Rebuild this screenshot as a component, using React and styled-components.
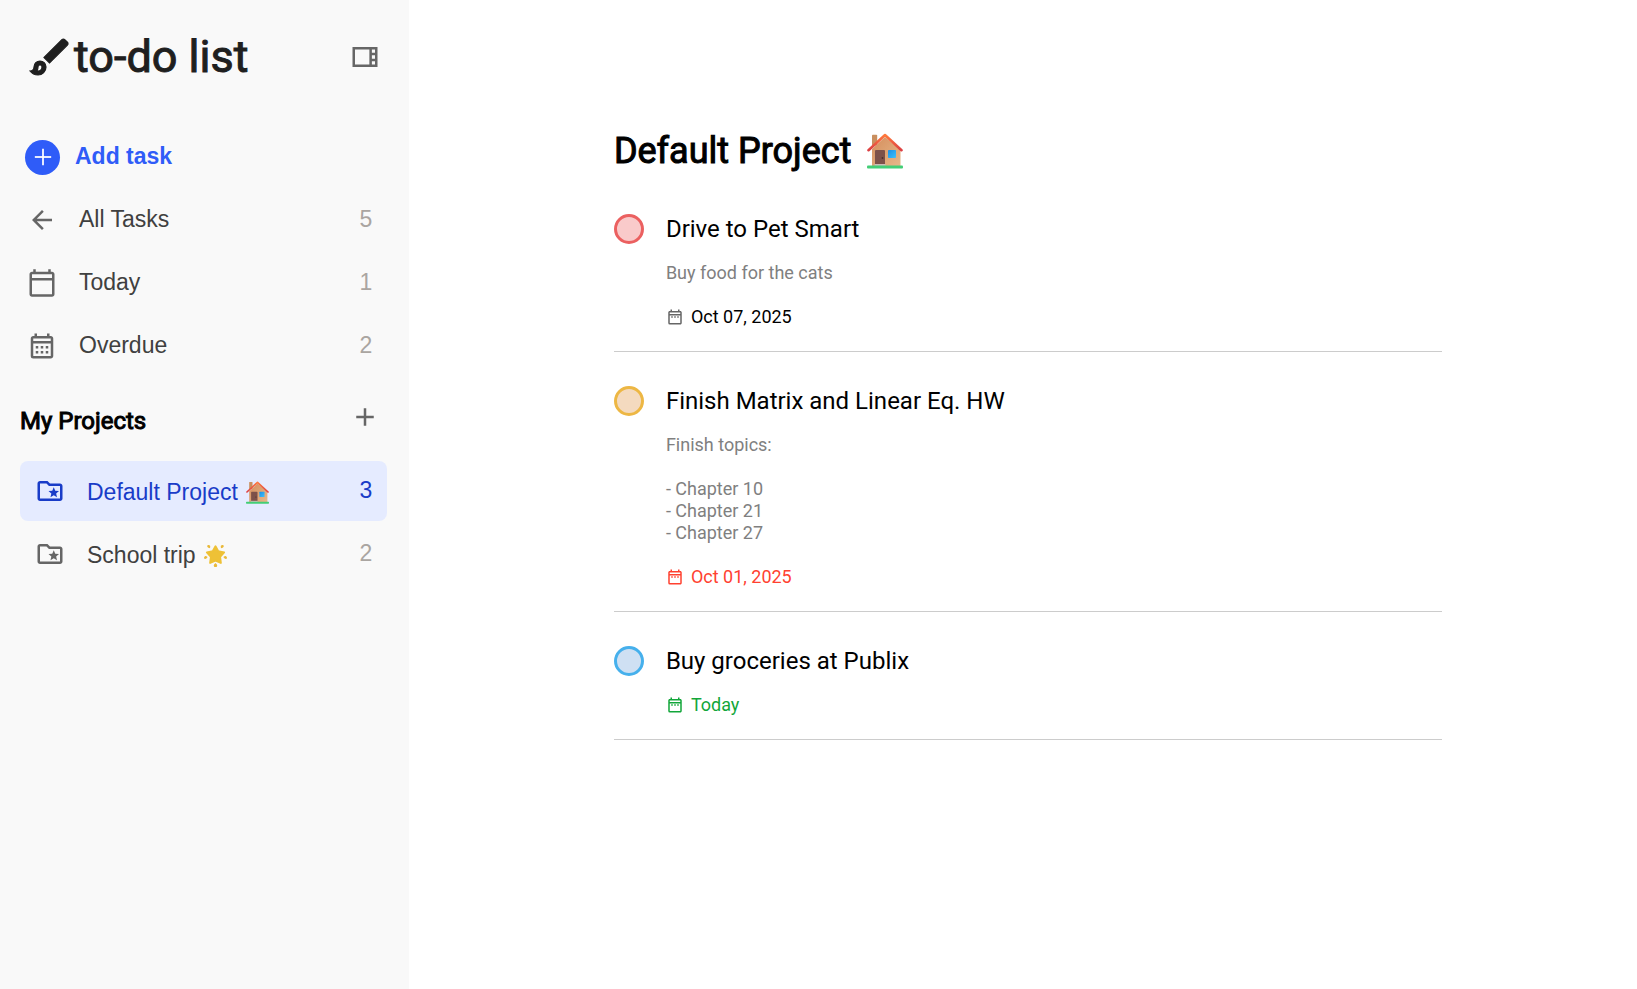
import React, { useState } from 'react';
import styled, { createGlobalStyle, css } from 'styled-components';
import { Plus } from 'lucide-react';
import {
  MdAdd,
  MdArrowBack,
  MdOutlineBrush,
  MdOutlineCalendarMonth,
  MdOutlineCalendarToday,
  MdOutlineDateRange,
  MdOutlineFolderSpecial,
  MdOutlineViewSidebar,
} from 'react-icons/md';

const GlobalStyle = createGlobalStyle`
  *, *::before, *::after { box-sizing: border-box; }
  body { margin: 0; background: #fff; color: #000; font-family: Roboto, sans-serif; }
  h1, h2, h3, p, ul { margin: 0; padding: 0; }
  ul { list-style: none; }
  button { border: 0; background: none; padding: 0; font: inherit; color: inherit; cursor: pointer; }
  svg { display: block; flex: none; }
`;

const Layout = styled.div`
  display: flex;
  min-height: 100vh;
`;

const Sidebar = styled.aside`
  width: 25%;
  flex: none;
  padding: 0 22px 0 20px;
  background: #f9f9f9;
`;

const Bar = styled.div`
  display: flex;
  align-items: center;
  justify-content: space-between;
  padding-right: 7px;
`;

const BrandBar = styled(Bar)`
  height: 114px;
  padding-left: 6px;
  margin-bottom: 13px;
`;

const ProjectsBar = styled(Bar)`
  height: 85px;
`;

const boldRegular = css`
  font-weight: 400;
  -webkit-text-stroke: 1px currentColor;
`;

const Brand = styled.h1`
  display: flex;
  align-items: center;
  color: #1f1f1f;
  font-size: 45px;
  line-height: 56px;
  white-space: nowrap;
  ${boldRegular}
`;

const BrushIcon = styled(MdOutlineBrush)`
  path:not([fill='none']) {
    stroke: currentColor;
    stroke-width: 0.6px;
  }
  path[fill='none'] {
    stroke: none;
  }
`;

const IconButton = styled.button`
  color: #666;
  font-size: 30px;
  padding-bottom: ${(p) => (p.$raised ? '4px' : '0')};
`;

const SectionTitle = styled.h2`
  padding-top: 4px;
  font-size: 24px;
  line-height: 30px;
  ${boldRegular}
`;

const NavList = styled.ul`
  display: flex;
  flex-direction: column;
  gap: 3px;
`;

const NavButton = styled.button`
  display: flex;
  align-items: center;
  width: 100%;
  height: 60px;
  gap: 22px;
  padding: 0 15px 0 7px;
  border-radius: 8px;
  color: #404040;
  font-family: 'Liberation Sans', Arial, sans-serif;
  font-size: 23px;
  line-height: 26px;
  text-align: left;
`;

const ProjectButton = styled(NavButton)`
  padding-left: 15px;
  background: ${(p) => (p.$active ? '#e5ebff' : 'transparent')};
  color: ${(p) => (p.$active ? '#193cc8' : '#404040')};
`;

const AddTaskButton = styled(NavButton)`
  gap: 15px;
  padding-left: 5px;
  margin-bottom: 3px;
  color: #2f5cf8;
  font-weight: 700;
`;

const AddDisc = styled.span`
  display: grid;
  place-items: center;
  width: 35px;
  height: 35px;
  flex: none;
  border-radius: 50%;
  background: #2f5cf8;
  color: #fff;
`;

const NavIcon = styled.span`
  color: ${(p) => (p.$active ? 'inherit' : '#666')};
  font-size: 30px;
`;

const NavLabel = styled.span`
  flex: 1;
  padding-bottom: 2px;
`;

const ProjectLabel = styled.span`
  display: flex;
  align-items: center;
  gap: 8px;
  flex: 1;
  padding-top: 2px;
`;

const Count = styled.span`
  padding-bottom: 2px;
  color: ${(p) => (p.$active ? 'inherit' : '#aaa5a1')};
`;

const Main = styled.main`
  flex: 1;
  min-width: 0;
  padding: 129px 11.9% 40px 12.5%;
`;

const PageTitle = styled.h2`
  display: flex;
  align-items: center;
  gap: 16px;
  margin-bottom: 41px;
  font-size: 36px;
  line-height: 44px;
  ${boldRegular}
`;

const TaskList = styled.ul`
  display: flex;
  flex-direction: column;
  gap: 34px;
`;

const Task = styled.li`
  display: flex;
  gap: 22px;
  padding-bottom: 23px;
  border-bottom: 1px solid #ccc;
`;

const priorities = {
  high: { ring: '#eb6060', fill: '#f9caca' },
  medium: { ring: '#edb744', fill: '#f4dabf' },
  low: { ring: '#46b0ec', fill: '#cfe0f3' },
};

const TaskCheck = styled.input`
  appearance: none;
  width: 30px;
  height: 30px;
  flex: none;
  margin: 0;
  border: 3px solid ${(p) => priorities[p.$priority].ring};
  border-radius: 50%;
  background: ${(p) => priorities[p.$priority].fill};
  cursor: pointer;
`;

const TaskBody = styled.div`
  flex: 1;
  min-width: 0;
  font-size: 18px;
  line-height: 22px;
`;

const TaskTitle = styled.label`
  display: block;
  margin-bottom: 18px;
  font-size: 24px;
  line-height: 30px;
`;

const TaskNotes = styled.p`
  margin-bottom: 22px;
  color: #808080;
  white-space: pre-line;
`;

const dueColors = { upcoming: '#000', overdue: '#ff4130', today: '#12a63a' };

const Due = styled.p`
  display: flex;
  align-items: center;
  gap: 7px;
  color: ${(p) => dueColors[p.$status]};

  svg {
    color: ${(p) => (p.$status === 'upcoming' ? '#666' : 'inherit')};
    font-size: 18px;
  }
`;

function HouseIcon({ size }) {
  return (
    <svg width={size} height={size} viewBox="0 0 36 36" role="img" aria-label="House">
      <defs>
        <linearGradient id="houseWall" x1="0" x2="1" y1="0" y2="1">
          <stop offset="0" stopColor="#d58e5c" />
          <stop offset="1" stopColor="#e6b78a" />
        </linearGradient>
        <linearGradient id="houseRoof" x1="0" x2="0" y1="0" y2="1">
          <stop offset="0" stopColor="#ff7a3c" />
          <stop offset="1" stopColor="#dc3f43" />
        </linearGradient>
        <linearGradient id="houseWindow" x1="0" x2="1" y1="0" y2="1">
          <stop offset="0" stopColor="#1a8fe6" />
          <stop offset="1" stopColor="#3fc0fa" />
        </linearGradient>
      </defs>
      <path d="M5 2.5q0-.8.8-.8h3.6q.8 0 .8.8v10H5z" fill="#c98f5f" />
      <path d="M5 16 18 4l15.500 13v16H5z" fill="url(#houseWall)" />
      <path
        d="M1.500 17.200 18 2l16.500 15.200"
        fill="none"
        stroke="url(#houseRoof)"
        strokeWidth="2.6"
        strokeLinecap="round"
        strokeLinejoin="round"
      />
      <path d="M8 18q0-1 1-1h8q1 0 1 1v14H8z" fill="#7d5149" />
      <circle cx="15.5" cy="25" r=".9" fill="#4c302c" />
      <path d="M7.500 31h11v2h-11z" fill="#cdbcb8" />
      <rect x="21" y="17" width="8" height="8" rx=".8" fill="url(#houseWindow)" />
      <rect x="0" y="32.5" width="36" height="3" rx="1" fill="#43ce76" />
    </svg>
  );
}

function GlowingStarIcon({ size }) {
  return (
    <svg width={size} height={size} viewBox="0 0 24 24" role="img" aria-label="Glowing star">
      <path
        d="M12 2.400 14.900 7.600l6.100 1.200-4.200 4.700.8 6.300-5.600-2.500-5.600 2.500.8-6.300L3 8.800l6.100-1.200z"
        fill="#eec136"
        stroke="#eec136"
        strokeWidth="2"
        strokeLinejoin="round"
      />
      <g fill="#e9b93a">
        <path d="M12 19.800c1 1 1.800 1.800 1.800 2.700a1.800 1.800 0 0 1-3.600 0c0-.9.8-1.700 1.800-2.700z" />
        <path d="M4.200 1c1.500-.3 2.600.6 2.300 1.600L6.300 4.500 4.500 3.800C3 3.200 3 1.600 4.200 1z" />
        <path d="M19.800 1c-1.500-.3-2.600.6-2.300 1.600l.2 1.900 1.800-.7C21 3.200 21 1.600 19.800 1z" />
        <path d="M3.800 13.600c-1 1.600-2 2.300-2.900 2-1.200-.5-1.200-2.300.1-2.900.8-.3 1.700.2 2.800.9z" />
        <path d="M20.200 13.600c1 1.600 2 2.300 2.900 2 1.200-.5 1.200-2.300-.1-2.900-.8-.3-1.700.2-2.800.9z" />
      </g>
    </svg>
  );
}

const filters = [
  { label: 'All Tasks', count: 5, Icon: MdArrowBack },
  { label: 'Today', count: 1, Icon: MdOutlineCalendarToday },
  { label: 'Overdue', count: 2, Icon: MdOutlineCalendarMonth },
];

const projects = [
  { name: 'Default Project', count: 3, Emoji: HouseIcon },
  { name: 'School trip', count: 2, Emoji: GlowingStarIcon },
];

const tasks = [
  {
    id: 'pet-smart',
    title: 'Drive to Pet Smart',
    notes: 'Buy food for the cats',
    due: 'Oct 07, 2025',
    status: 'upcoming',
    priority: 'high',
  },
  {
    id: 'matrix-hw',
    title: 'Finish Matrix and Linear Eq. HW',
    notes: 'Finish topics:\n\n- Chapter 10\n- Chapter 21\n- Chapter 27',
    due: 'Oct 01, 2025',
    status: 'overdue',
    priority: 'medium',
  },
  {
    id: 'groceries',
    title: 'Buy groceries at Publix',
    due: 'Today',
    status: 'today',
    priority: 'low',
  },
];

export default function App() {
  const [selected, setSelected] = useState('Default Project');

  return (
    <>
      <GlobalStyle />
      <Layout>
        <Sidebar>
          <BrandBar>
            <Brand>
              <BrushIcon size={48} aria-hidden="true" />
              to-do list
            </Brand>
            <IconButton aria-label="Toggle sidebar">
              <MdOutlineViewSidebar />
            </IconButton>
          </BrandBar>

          <nav aria-label="Tasks">
            <AddTaskButton>
              <AddDisc>
                <Plus size={28} strokeWidth={1.5} strokeLinecap="butt" />
              </AddDisc>
              <NavLabel>Add task</NavLabel>
            </AddTaskButton>
            <NavList>
              {filters.map(({ label, count, Icon }) => (
                <li key={label}>
                  <NavButton>
                    <NavIcon>
                      <Icon />
                    </NavIcon>
                    <NavLabel>{label}</NavLabel>
                    <Count>{count}</Count>
                  </NavButton>
                </li>
              ))}
            </NavList>
          </nav>

          <ProjectsBar>
            <SectionTitle>My Projects</SectionTitle>
            <IconButton $raised aria-label="Add project">
              <MdAdd />
            </IconButton>
          </ProjectsBar>
          <NavList>
            {projects.map(({ name, count, Emoji }) => {
              const active = name === selected;
              return (
                <li key={name}>
                  <ProjectButton $active={active} onClick={() => setSelected(name)}>
                    <NavIcon $active={active}>
                      <MdOutlineFolderSpecial />
                    </NavIcon>
                    <ProjectLabel>
                      {name}
                      <Emoji size={23} />
                    </ProjectLabel>
                    <Count $active={active}>{count}</Count>
                  </ProjectButton>
                </li>
              );
            })}
          </NavList>
        </Sidebar>

        <Main>
          <PageTitle>
            Default Project
            <HouseIcon size={36} />
          </PageTitle>
          <TaskList>
            {tasks.map((task) => (
              <Task key={task.id}>
                <TaskCheck type="checkbox" id={task.id} $priority={task.priority} />
                <TaskBody>
                  <TaskTitle htmlFor={task.id}>{task.title}</TaskTitle>
                  {task.notes && <TaskNotes>{task.notes}</TaskNotes>}
                  <Due $status={task.status}>
                    <MdOutlineDateRange aria-hidden="true" />
                    {task.due}
                  </Due>
                </TaskBody>
              </Task>
            ))}
          </TaskList>
        </Main>
      </Layout>
    </>
  );
}
